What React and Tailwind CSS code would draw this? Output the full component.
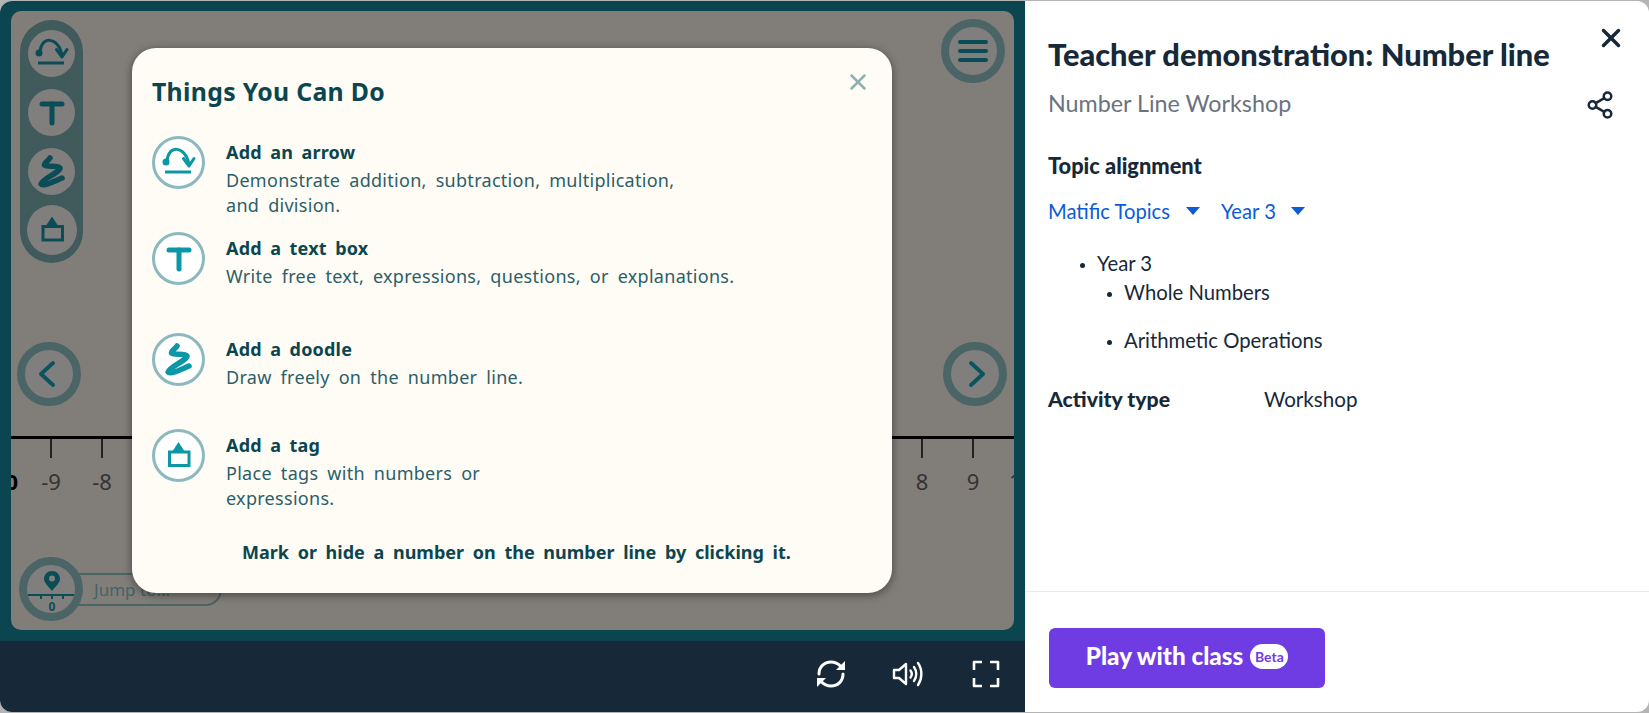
import { X, Share2 } from 'lucide-react'

const modalFont = "[font-family:'Noto_Sans',sans-serif]"

function ArrowIcon({ color }) {
  return (
    <g fill="none" stroke={color} strokeWidth="3" strokeLinecap="round">
      <circle cx="14" cy="26" r="3.5" fill={color} stroke="none" />
      <path d="M15 25C16 9 33 9 37 28" />
      <path d="M31.5 22.5L37 30L42 22.5" strokeLinejoin="round" />
      <path d="M13 36H39" strokeLinecap="butt" />
    </g>
  )
}

function TextIcon({ color }) {
  return (
    <g fill="none" stroke={color} strokeWidth="5" strokeLinecap="round">
      <path d="M17 18H37" />
      <path d="M27 18V37" />
    </g>
  )
}

function DoodleIcon({ color }) {
  return (
    <path
      d="M25 13C23 16 19 18 19.5 20C22 22.5 33 19.5 35 23C36 26.5 17 34 16 39C18 42 30 36 37 33"
      fill="none"
      stroke={color}
      strokeWidth="5.5"
      strokeLinecap="round"
      strokeLinejoin="round"
    />
  )
}

function TagIcon({ color }) {
  return (
    <g>
      <path d="M26.5 13L33 23H20Z" fill={color} />
      <rect x="17.5" y="23" width="19.5" height="13.5" fill="none" stroke={color} strokeWidth="3" />
    </g>
  )
}

const rows = [
  { title: 'Add an arrow', Icon: ArrowIcon, body: ['Demonstrate addition, subtraction, multiplication,', 'and division.'], h: 'h-[96px]' },
  { title: 'Add a text box', Icon: TextIcon, body: ['Write free text, expressions, questions, or explanations.'], h: 'h-[101px]' },
  { title: 'Add a doodle', Icon: DoodleIcon, body: ['Draw freely on the number line.'], h: 'h-[96px]' },
  { title: 'Add a tag', Icon: TagIcon, body: ['Place tags with numbers or', 'expressions.'], h: 'h-[96px]' },
]

function ToolCircle({ Icon, size, box }) {
  return (
    <div className={`${size} rounded-full bg-[#807f7d]`}>
      <svg viewBox={box} className="w-full h-full">
        <Icon color="#0b4d56" />
      </svg>
    </div>
  )
}

function RingButton({ className, children }) {
  return (
    <div className={`absolute w-[64px] h-[64px] rounded-full border-[8px] border-[#4b6466] bg-[#807f7d] flex items-center justify-center ${className}`}>
      {children}
    </div>
  )
}

function Tick({ className, label }) {
  return (
    <div className={`absolute top-[428px] w-[40px] flex flex-col items-center ${className}`}>
      <div className="w-[2px] h-[19px] bg-[#222]" />
      <div className="mt-[9px] text-[22px] leading-[28px] text-[#333] [font-family:'Noto_Sans',sans-serif]">{label}</div>
    </div>
  )
}

function Game() {
  return (
    <div className="relative flex-1 rounded-[10px] bg-[#817e79] overflow-hidden">
      {/* number line */}
      <div className="absolute left-0 right-0 top-[425px] h-[3px] bg-black" />
      <Tick className="left-[20px]" label="-9" />
      <Tick className="left-[71px]" label="-8" />
      <Tick className="left-[891px]" label="8" />
      <Tick className="left-[942px]" label="9" />
      <div className="absolute right-[996px] top-[456px] text-[22px] leading-[28px] font-bold text-black [font-family:'Noto_Sans',sans-serif]">-10</div>
      <div className="absolute left-[998px] top-[456px] text-[22px] leading-[28px] text-[#333] [font-family:'Noto_Sans',sans-serif]">10</div>

      {/* tool pill */}
      <div className="absolute left-[9px] top-[9px] w-[63px] h-[243px] rounded-full bg-[#415a5c] flex flex-col items-center pt-[10px] gap-[12px]">
        <ToolCircle Icon={ArrowIcon} size="w-[47px] h-[47px]" box="3 3 47 47" />
        <ToolCircle Icon={TextIcon} size="w-[47px] h-[47px]" box="3 3 47 47" />
        <ToolCircle Icon={DoodleIcon} size="w-[47px] h-[47px]" box="3 3 47 47" />
        <div className="-mt-[2px]">
          <ToolCircle Icon={TagIcon} size="w-[50px] h-[50px]" box="1.5 1.5 50 50" />
        </div>
      </div>

      <RingButton className="left-[930px] top-[8px]">
        <div className="flex flex-col gap-[5px]">
          <div className="w-[30px] h-[4px] rounded-full bg-[#0b4d56]" />
          <div className="w-[30px] h-[4px] rounded-full bg-[#0b4d56]" />
          <div className="w-[30px] h-[4px] rounded-full bg-[#0b4d56]" />
        </div>
      </RingButton>

      <RingButton className="left-[6px] top-[331px]">
        <svg width="20" height="28" viewBox="0 0 20 28" fill="none" stroke="#0b5560" strokeWidth="4" strokeLinecap="round" strokeLinejoin="round" className="mr-[4px]">
          <path d="M16 3L4 14L16 25" />
        </svg>
      </RingButton>
      <RingButton className="left-[932px] top-[331px]">
        <svg width="20" height="28" viewBox="0 0 20 28" fill="none" stroke="#0b5560" strokeWidth="4" strokeLinecap="round" strokeLinejoin="round" className="ml-[4px]">
          <path d="M4 3L16 14L4 25" />
        </svg>
      </RingButton>

      {/* jump to */}
      <div className="absolute left-[64px] top-[562px] w-[147px] h-[33px] rounded-r-full border-2 border-[#4b6466] pl-[17px] text-[17px] leading-[29px] text-[#3f6469] [font-family:'Noto_Sans',sans-serif]">
        Jump to...
      </div>
      <RingButton className="left-[8px] top-[546px]">
        <svg width="48" height="48" viewBox="0 0 48 48" className="shrink-0">
          <path d="M25 6C20.5 6 17 9.5 17 14C17 18 22 22 25 26C28 22 33 18 33 14C33 9.5 29.5 6 25 6Z" fill="#0b4d56" />
          <circle cx="25" cy="13.5" r="3" fill="#807f7d" />
          <path d="M1 30H47" stroke="#0b4d56" strokeWidth="2" />
          <path d="M14 30V34M25 30V34M36 30V34" stroke="#0b4d56" strokeWidth="2" />
          <text x="25" y="46" textAnchor="middle" fontSize="12" fontWeight="700" fontFamily="Noto Sans" fill="#0b4d56">0</text>
        </svg>
      </RingButton>

      {/* things you can do */}
      <div className={`absolute left-[121px] top-[37px] w-[760px] h-[545px] rounded-[24px] bg-[#fffcf5] shadow-[0_2px_10px_rgba(0,0,0,0.45)] pl-[20px] pt-[26px] ${modalFont}`}>
        <X className="absolute right-[21px] top-[21px] w-[26px] h-[26px] text-[#8fb0b3]" strokeWidth={2.3} />
        <h2 className="text-[24.8px] leading-[34px] font-bold text-[#0b4650] tracking-[0.3px]">Things You Can Do</h2>
        <div className="mt-[32px]">
          {rows.map(({ title, Icon, body, h }) => (
            <div key={title} className={`flex gap-[21px] ${h}`}>
              <div className="w-[53px] h-[53px] shrink-0 mt-[-4px] rounded-full bg-white border-[3px] border-[#8cb9be] box-border overflow-hidden">
                <svg viewBox="3 3 47 47" className="w-full h-full">
                  <Icon color="#0b97a5" />
                </svg>
              </div>
              <div>
                <div className="text-[18px] leading-[24px] font-bold text-[#0b4650] tracking-[0.2px] [word-spacing:3.5px]">{title}</div>
                <div className="mt-[4px] text-[18px] leading-[24.5px] text-[#2b5f69] tracking-[0.29px] [word-spacing:4px]">
                  {body.map((line) => (
                    <div key={line}>{line}</div>
                  ))}
                </div>
              </div>
            </div>
          ))}
        </div>
        <div className="absolute left-[110px] top-[492px] text-[18px] leading-[24px] font-bold text-[#0b4650] [word-spacing:4px]">
          Mark or hide a number on the number line by clicking it.
        </div>
      </div>
    </div>
  )
}

function Caret() {
  return <div className="w-0 h-0 border-x-[7px] border-x-transparent border-t-[8px] border-t-[#0b5cd7]" />
}

function BottomBar() {
  return (
    <div className="h-[71px] bg-[#172938] flex items-center justify-end pr-[25px] pb-[5px]">
      <svg width="30" height="30" viewBox="0 0 30 30" fill="none" stroke="white" strokeWidth="3" strokeLinecap="round">
        <path d="M3 15C3 8 8 3 15 3C19 3 22 4.5 25 7.5" />
        <path d="M27 15C27 22 22 27 15 27C11 27 8 25.5 5 22.5" />
        <path d="M29 2V11H20Z" fill="white" stroke="none" />
        <path d="M1 28V19H10Z" fill="white" stroke="none" />
      </svg>
      <svg width="32" height="26" viewBox="0 0 32 26" fill="none" stroke="white" strokeWidth="2.4" strokeLinecap="round" strokeLinejoin="round" className="ml-[46px]">
        <path d="M2 9H7L14 3V23L7 17H2Z" />
        <path d="M18.5 9.5C20 11.5 20 14.5 18.5 16.5" />
        <path d="M22 6C25 10 25 16 22 20" />
        <path d="M26 2C30.5 8.5 30.5 17.5 26 24" />
      </svg>
      <svg width="28" height="28" viewBox="0 0 28 28" fill="none" stroke="white" strokeWidth="2.6" strokeLinejoin="round" className="ml-[48px]">
        <path d="M2 10V2H10" />
        <path d="M18 2H26V10" />
        <path d="M2 18V26H10" />
        <path d="M26 18V26H18" />
      </svg>
    </div>
  )
}

function Details() {
  return (
    <div className="flex-1 relative pl-[23px] text-[#172938] [font-family:Lato,sans-serif]">
      <X className="absolute right-[23px] top-[22px] w-[30px] h-[30px] text-[#172938]" strokeWidth={2.8} />
      <Share2 className="absolute right-[34px] top-[89px] w-[30px] h-[30px] text-[#172938]" strokeWidth={2} />
      <h1 className="pt-[36px] text-[30.8px] leading-[36px] font-black whitespace-nowrap">Teacher demonstration: Number line</h1>
      <div className="mt-[15px] text-[23.3px] leading-[30px] text-[#6b7280]">Number Line Workshop</div>
      <div className="mt-[35px] text-[21.8px] leading-[26px] font-black">Topic alignment</div>
      <div className="mt-[19px] flex items-center text-[20.2px] leading-[26px] text-[#0b5cd7]">
        <span>Matific Topics</span>
        <span className="ml-[16px]"><Caret /></span>
        <span className="ml-[21px]">Year 3</span>
        <span className="ml-[15px]"><Caret /></span>
      </div>
      <ul className="mt-[26px] ml-[34px] list-disc pl-[15px] text-[20.3px] leading-[26px] marker:text-[15px]">
        <li>Year 3</li>
        <ul className="list-disc pl-[27px] mt-[3px]">
          <li>Whole Numbers</li>
          <li className="mt-[22px]">Arithmetic Operations</li>
        </ul>
      </ul>
      <div className="mt-[33px] flex text-[20.6px] leading-[26px]">
        <span className="w-[216px] font-black text-[21.2px]">Activity type</span>
        <span>Workshop</span>
      </div>
    </div>
  )
}

export default function App() {
  return (
    <div className="w-[1649px] h-[713px] bg-[#b4b4b4] py-px overflow-hidden">
      <div className="h-full flex rounded-[12px] overflow-hidden bg-white">
        <div className="w-[1025px] flex flex-col">
          <div className="flex-1 flex bg-[#0b4650] pt-[10px] px-[11px] pb-[11px]">
            <Game />
          </div>
          <BottomBar />
        </div>
        <div className="flex-1 flex flex-col">
          <Details />
          <div className="h-[121px] border-t border-[#e8eaee] pl-[24px] pt-[36px]">
            <button className="w-[276px] h-[60px] rounded-[6px] bg-[#6f3ce3] flex items-center justify-center gap-[7px] pb-[3px] text-white [font-family:Lato,sans-serif]">
              <span className="text-[24.3px] font-black">Play with class</span>
              <span className="w-[38px] h-[25px] rounded-full bg-white text-[#6f3ce3] text-[14px] leading-[25px] font-bold">Beta</span>
            </button>
          </div>
        </div>
      </div>
    </div>
  )
}
